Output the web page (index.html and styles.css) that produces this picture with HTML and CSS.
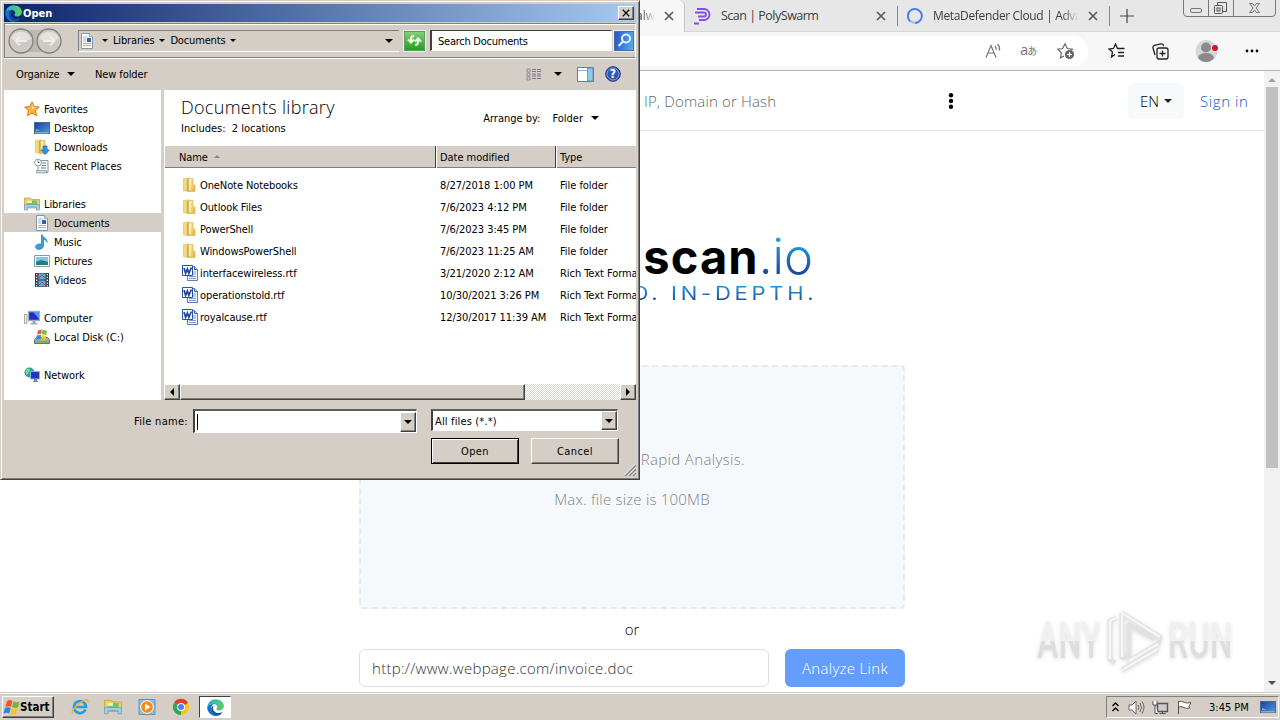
FILE: index.html
```
<!DOCTYPE html>
<html lang="en">
<head>
  <meta charset="UTF-8" />
  <meta name="viewport" content="width=device-width, initial-scale=1" />
  <title>Open</title>
  <link rel="stylesheet" href="styles.css">
</head>
<body>

  <!-- shared icons -->
  <svg class="defs" width="0" height="0">
    <defs>
      <linearGradient id="gFolder" x1="0" x2="1" y2="1"><stop offset="0" stop-color="#fff3b0"/><stop offset="1" stop-color="#e0b13c"/></linearGradient>
      <linearGradient id="gScreen" x1="0" x2="1" y2="1"><stop offset="0" stop-color="#1b3f94"/><stop offset="1" stop-color="#4c9be8"/></linearGradient>
      <linearGradient id="gEdge" x1="0" x2="1"><stop offset="0" stop-color="#22a7e0"/><stop offset="1" stop-color="#5fd45a"/></linearGradient>
      <symbol id="edge" viewBox="0 0 16 16">
        <path d="M0.2 7.600C.8 3.300 4 .2 8.200 .2c4.600 0 7.700 3 7.700 6.300 0 2.600-2 4.300-4.400 4.300-1.800 0-2.600-.7-2.600-1.300 0-.6.7-.9.7-2.100 0-1.500-1.500-2.700-3.600-2.700C3.600 4.700 1.300 5.800.2 7.600z" fill="url(#gEdge)"/>
        <path d="M.2 7.600C1.300 5.500 3.600 4.600 6 4.700 4.600 5.800 4 7.400 4 9.200c0 3.200 2.600 5.900 6 6.500A8 8 0 0 1 .2 7.600z" fill="#1672c4"/>
        <path d="M6.300 6.400C5.100 8 5.400 10.300 7 11.800c1.900 1.700 5 1.900 7.700.5-1 1.800-2.600 3-4.700 3.500C6.400 15.500 4 12.600 4 9.700c0-1.500.9-2.700 2.300-3.300z" fill="#0c4f9e"/>
      </symbol>
      <symbol id="star" viewBox="0 0 16 16"><path d="M8 .8l2.200 4.700 5.200.6-3.800 3.500 1 5.200L8 12.200l-4.600 2.600 1-5.200L.6 6.100l5.200-.6z" fill="#fcb53a" stroke="#c9771c" stroke-width=".9"/><path d="M8 3l1.300 3.400 3 .3-4.300 1z" fill="#ffe79a"/></symbol>
      <symbol id="desktop" viewBox="0 0 16 16"><rect x=".5" y="2.500" width="15" height="11" fill="url(#gScreen)" stroke="#49688f"/><path d="M1 12h14v1.500H1z" fill="#8ca9c6"/><path d="M2 9l4 2H2z" fill="#78b6ec"/></symbol>
      <symbol id="folder" viewBox="0 0 16 16"><path d="M1.500 1.500L7 .8v13.700l-5.500-.8z" fill="#f3da7f" stroke="#d9b95a" stroke-width=".6"/><path d="M6.500 1.500H11v6l2 .8v6.200H6.500z" fill="url(#gFolder)" stroke="#d1ac4e" stroke-width=".6"/><path d="M5.500 2v12.500" stroke="#d3a93c" stroke-width="1.200"/><path d="M8 3v10" stroke="#fff7cc" stroke-width="1.200"/></symbol>
      <symbol id="downloads" viewBox="0 0 16 16"><use href="#folder"/><path d="M9 7h4v4h2.500L11 15.500 6.800 11H9z" fill="#2f95e0" stroke="#1a69b0" stroke-width=".7"/></symbol>
      <symbol id="recent" viewBox="0 0 16 16"><path d="M4 2.500h10v12H4z" fill="#f4f8fa" stroke="#8296a3"/><path d="M2.500 12.500h10v2.500h-10z" fill="#cdd8df" stroke="#8296a3" stroke-width=".7"/><path d="M8 5h4M8 7.500h4M7 10h5" stroke="#6e8797"/><circle cx="4" cy="4.500" r="3.400" fill="#fff" stroke="#8c9ba5"/><path d="M4 2.500v2h1.700" stroke="#444" fill="none" stroke-width=".8"/></symbol>
      <symbol id="libraries" viewBox="0 0 16 16"><path d="M.5 2h6l1 1.500h8V12H.5z" fill="#f0cf68" stroke="#cba442" stroke-width=".8"/><path d="M3 4.500h10V9H3z" fill="#72c36b"/><path d="M3 4.500h5V7H3z" fill="#eaf3c4"/><path d="M.5 8.500h15v5.500h-3v-3h-9v3h-3z" fill="#9fd3ee" stroke="#699dbb" stroke-width=".7"/></symbol>
      <symbol id="doc" viewBox="0 0 16 16"><path d="M2.500.5h8l3 3v12h-11z" fill="#fff" stroke="#8495a8"/><path d="M10.500.5v3h3" fill="#dce6ef" stroke="#8495a8" stroke-width=".8"/><path d="M4 4h4.500M4 6h3M4 8h3M4 10.500h8M4 12.500h8" stroke="#8aaccb" stroke-width=".9"/><path d="M8 5h4v4H8z" fill="#2d66a4"/></symbol>
      <symbol id="music" viewBox="0 0 16 16"><path d="M8 .5c.6 3.200 5.500 3.500 5 8-.3-2-1.700-2.800-3.500-3V12c0 2-2 3.400-4.500 3.400S1.300 14 1.500 12.500 3.500 10 5.800 10c.8 0 1.400.2 1.700.3V.5z" fill="#3a9de0" stroke="#1b6fb5" stroke-width=".6"/></symbol>
      <symbol id="pictures" viewBox="0 0 16 16"><path d="M.5 2.500h15v11H.5z" fill="#fff" stroke="#8399ad"/><path d="M2 4h12v8H2z" fill="#7ec4ee"/><path d="M2 9l5-2 7 2v3H2z" fill="#257c79"/></symbol>
      <symbol id="videos" viewBox="0 0 16 16"><path d="M1 1h14v14H1z" fill="#333d48"/><path d="M4.500 1.500h7v6h-7zM4.500 8.500h7v6h-7z" fill="#64a9d8"/><path d="M5 6l3-3 3 3M5 13l3-3 3 3" stroke="#b04352" fill="none"/><path d="M2.700 2v13M13.300 2v13" stroke="#fff" stroke-width="1.300" stroke-dasharray="1.300 1.500"/></symbol>
      <symbol id="computer" viewBox="0 0 16 16"><path d="M.5 4.500h2.500v9H.5z" fill="#e8ecc9" stroke="#8b967e" stroke-width=".7"/><path d="M4.500 1.500h11v9h-11z" fill="#1d2fc0" stroke="#9ab0c9" stroke-width="1.300"/><path d="M9 2h6v7z" fill="#5f8ff0"/><path d="M8.500 11h3v2h2v1.500h-7V13h2z" fill="#9aaab9"/></symbol>
      <symbol id="disk" viewBox="0 0 16 16"><path d="M.5 10.500l2-2h11l2 2v4H.5z" fill="#a5adaf" stroke="#687073"/><path d="M1.500 12h13v1.800h-13z" fill="#6abd3e"/><path d="M4 1.500l3.500-1v4L3 5.500z" fill="#eb5b29"/><path d="M8.500.6L13 2l-1 4-4.200-1z" fill="#78bb36"/><path d="M2.700 6.500l4.500-.8-.6 4.300-4.400.7z" fill="#2f8cd6"/><path d="M8 6l4 1-.6 4-4-1z" fill="#f7c52c"/></symbol>
      <symbol id="network" viewBox="0 0 16 16"><circle cx="5.500" cy="5.500" r="5" fill="#28a1bc"/><path d="M2 3c2-2 4-1 4 0S4 5 4 7L2 8z" fill="#7bdc84"/><path d="M6.500 4.500h9v7.500h-9z" fill="#1b36bf" stroke="#9db3d5"/><path d="M10 12h3v2h1v1H9v-1h1z" fill="#75899d"/></symbol>
      <symbol id="word" viewBox="0 0 16 16"><path d="M5.500 1.500h7l3 3v11h-10z" fill="#f1f6fd" stroke="#5a7db5"/><path d="M12.500 1.500v3h3" fill="#b7cceb" stroke="#3d5f9e"/><path d="M11 7h3M11 9h3M7 11.500h7M7 13.500h7" stroke="#7ea0d4"/><path d="M.5.5h10v10H.5z" fill="#fff" stroke="#2952a0"/><path d="M2 3l1.600 5.300L5.400 4l1.400 4.300L9.400 2.500" fill="none" stroke="#1f459a" stroke-width="1.700"/></symbol>
      <symbol id="x" viewBox="0 0 10 10"><path d="M1 1l8 8M9 1L1 9" stroke="currentColor" stroke-width="1.600" fill="none"/></symbol>
    </defs>
  </svg>

  <div class="desktop">

    <!-- browser window behind the dialog -->
    <div class="browser">
      <div class="tabs">
        <div class="tab active"><span class="fade">Malw</span><svg class="close"><use href="#x"/></svg></div>
        <div class="tab poly">
          <svg width="18" height="18" viewBox="0 0 18 18" fill="none" stroke="#7e52dc" stroke-width="1.800"><path d="M3 2h7a5.500 5.500 0 0 1 0 11H5M1 5.500h9a2 2 0 0 1 0 4H4M0 16.500h5"/></svg>
          <span>Scan | PolySwarm</span><svg class="close"><use href="#x"/></svg>
        </div>
        <div class="tab meta">
          <svg width="16" height="16" viewBox="0 0 16 16" fill="none" stroke="#4c7df0" stroke-width="2"><path d="M3.500 13.500A7 7 0 1 1 8 15"/><path d="M3.500 13.500L8 15" stroke="#a0bcf5"/></svg>
          <span class="fade">MetaDefender Cloud | Adva</span><svg class="close"><use href="#x"/></svg>
        </div>
        <svg class="plus" width="14" height="14" viewBox="0 0 14 14"><path d="M7 0v14M0 7h14" stroke="#444" stroke-width="1.200"/></svg>
        <div class="winbtns">
          <svg width="93" height="17" viewBox="0 0 93 17" fill="none" stroke="#777"><path d="M.5 0v13q0 3.500 3.500 3.500h85q3.500 0 3.500-3.500V0M25.500 0v16M50.500 0v16"/><rect x="7.500" y="8.500" width="11" height="4" rx="1.500"/><rect x="31.500" y="5.500" width="8" height="8" rx="1" stroke="#555"/><rect x="34" y="8" width="3" height="3" stroke="#555"/><path d="M34.500 5V2.500h9v9H40" stroke="#555"/><path d="M66.500 3.500h3l2 2.500 2-2.500h3l-3.500 4.500 3.500 4.500h-3l-2-2.500-2 2.500h-3L70 8z"/></svg>
        </div>
      </div>
      <div class="toolbar">
        <div class="address">
          <svg width="17" height="16" viewBox="0 0 17 16" fill="none" stroke="#777" stroke-width="1.200"><path d="M1 14.500L6 2.500l5 12M2.800 10h6.500M10 3q1.500 1.500 1.200 4M12.500 1q2.500 2.500 2 6.500"/></svg>
          <span class="aa">a<small>あ</small></span>
          <svg width="18" height="18" viewBox="0 0 18 18" fill="none" stroke="#666" stroke-width="1.200"><path d="M7 14l-3.500 1.800.8-5L.8 7.200l4.800-.7L8 1.800l2.300 4.700 5 .7-1.300 1.300"/><circle cx="12.500" cy="12.500" r="4.600" fill="#666" stroke="none"/><path d="M12.500 10v5M10 12.500h5" stroke="#fff"/></svg>
        </div>
        <svg class="fav" width="17" height="16" viewBox="0 0 17 16" fill="none" stroke="#222" stroke-width="1.300"><path d="M7 11.500L3.500 14l1-5L1 6l4.500-.6L7.500 1l2 4.500h7M10 9.500h6M10 13h6"/></svg>
        <svg class="coll" width="17" height="17" viewBox="0 0 17 17" fill="none" stroke="#222" stroke-width="1.300"><rect x="5" y="5" width="11" height="11" rx="2"/><path d="M10.500 7.500v6M7.500 10.500h6M3 12L1 5q-.5-2 1.500-2.700L9 .9q2-.4 2.500 1.600l.2.500"/></svg>
        <svg class="user" width="24" height="24" viewBox="0 0 24 24"><circle cx="11.500" cy="12" r="11" fill="#d5d7d8"/><circle cx="11" cy="8.500" r="5" fill="#8c8989"/><path d="M3 19q1-5 8-5t8 5q-3 4-8 4t-8-4z" fill="#8c8989"/><circle cx="20" cy="9" r="3" fill="#d8121e"/></svg>
        <svg class="dots" width="14" height="4" viewBox="0 0 14 4"><circle cx="2" cy="2" r="1.400"/><circle cx="7" cy="2" r="1.400"/><circle cx="12" cy="2" r="1.400"/></svg>
      </div>

      <div class="viewport">
        <div class="site">
          <header class="site-header">
            <span class="lookup">IP, Domain or Hash</span>
            <svg class="kebab" width="6" height="16" viewBox="0 0 6 16"><circle cx="3" cy="2.200" r="2.200"/><circle cx="3" cy="8" r="2.200"/><circle cx="3" cy="13.800" r="2.200"/></svg>
            <button class="lang">EN <i class="caret"></i></button>
            <a class="signin">Sign in</a>
          </header>
          <main class="scan">
            <div class="logo"><span class="name">scan<span class="io">.io</span></span><span class="tagline">D. IN-DEPTH.</span></div>
            <div class="dropzone">
              <p class="drop-text">Rapid Analysis.</p>
              <p class="drop-size">Max. file size is 100MB</p>
            </div>
            <div class="or">or</div>
            <div class="link-row">
              <div class="url"><span>http://www.webpage.com/invoice.doc</span></div>
              <button class="analyze"><span>Analyze Link</span></button>
            </div>
          </main>
        </div>
        <div class="page-scroll"><i class="up"></i><div class="thumb"></div><i class="down"></i></div>
      </div>
    </div>

    <div class="watermark">
      <span class="any">ANY</span>
      <svg width="58" height="64" viewBox="0 0 58 64" fill="none" stroke-linejoin="round"><path d="M16 4v44l7 0V16l26 14M10 9L4 12v38l5 4M16 4l38 24-2 7-29 17M16 61l36-21" stroke="#e2e2e2" stroke-width="5"/><path d="M16 4v44M16 4l38 24M10 9L4 12v38M16 61l36-21M23 52l29-17" stroke="#f6f6f6" stroke-width="2.500"/></svg>
      <span class="run">RUN</span>
    </div>

    <!-- Open dialog -->
    <div class="dialog">
      <div class="titlebar"><svg width="17" height="17"><use href="#edge"/></svg><span>Open</span><button class="x-btn"><svg width="8" height="8"><use href="#x"/></svg></button></div>
      <div class="navbar">
        <svg class="arrows" width="54" height="28" viewBox="0 0 54 28"><path d="M13 3h28v22H13z" fill="#bcb9b4"/><g stroke="#82807c" stroke-width="1.300" fill="#cdcac5"><circle cx="13" cy="14" r="12"/><circle cx="41" cy="14" r="12"/></g><g fill="#e4e2df"><path d="M3 12a10.500 10.500 0 0 1 20 0q-10 4-20 0z"/><path d="M31 12a10.500 10.500 0 0 1 20 0q-10 4-20 0z"/></g><path d="M19 14H8M12 9.500L7.500 14l4.500 4.500M35 14h11M42 9.500l4.500 4.500-4.500 4.500" stroke="#efeeeb" stroke-width="1.800" fill="none"/></svg>
        <div class="crumbs"><svg width="16" height="16"><use href="#doc"/></svg><i class="tri s"></i><span class="c1">Libraries</span><i class="tri s"></i><span class="c2">Documents</span><i class="tri s"></i><i class="tri last"></i></div>
        <div class="refresh"><svg width="17" height="15" viewBox="0 0 17 15" fill="none" stroke="#e9ffe4" stroke-width="2"><path d="M2 6.500l3 3 3-3M5 9V6q0-3 3-3M9 8.500l3-3 3 3M12 6v3q0 3-3 3"/></svg></div>
        <div class="search"><span>Search Documents</span></div>
        <div class="search-btn"><svg width="17" height="17" viewBox="0 0 17 17" fill="none" stroke="#e8f4ff" stroke-width="2"><circle cx="10" cy="6.500" r="4"/><path d="M7 9.500L2.500 14"/></svg></div>
      </div>
      <div class="commands">
        <span class="organize">Organize</span><i class="tri"></i><span class="newfolder">New folder</span>
        <svg class="views" width="16" height="13" viewBox="0 0 16 13" fill="none"><path d="M1 1h3v3H1zM1 5h3v3H1zM1 9h3v3H1z" stroke="#888f9a"/><path d="M6 1.500h9M6 3.500h9M6 6h9M6 8h9M6 10.500h9" stroke="#777d86" stroke-dasharray="4 1"/></svg>
        <i class="tri t2"></i>
        <svg class="pane" width="17" height="15" viewBox="0 0 17 15"><path d="M.5.5h16v14H.5z" fill="#fff" stroke="#5b7fa5"/><path d="M1 3.500h10" stroke="#9ab4cf"/><path d="M10.500 1h5.500v13h-5.500z" fill="#8dcde3" stroke="#5b7fa5" stroke-width=".7"/></svg>
        <svg class="help" width="16" height="16" viewBox="0 0 16 16"><circle cx="8" cy="8" r="7.300" fill="#3157b4" stroke="#1d2f72"/><circle cx="8" cy="8" r="6" fill="none" stroke="#91aee2" stroke-width=".8"/><text x="8" y="12.200" text-anchor="middle" fill="#fff" font-size="12" font-weight="bold">?</text></svg>
      </div>

      <div class="content">
        <nav class="side">
          <div class="item"><svg><use href="#star"/></svg><span>Favorites</span></div>
          <div class="item sub"><svg><use href="#desktop"/></svg><span>Desktop</span></div>
          <div class="item sub"><svg><use href="#downloads"/></svg><span>Downloads</span></div>
          <div class="item sub"><svg><use href="#recent"/></svg><span>Recent Places</span></div>
          <div class="item gap"><svg><use href="#libraries"/></svg><span>Libraries</span></div>
          <div class="item sub selected"><svg><use href="#doc"/></svg><span>Documents</span></div>
          <div class="item sub"><svg><use href="#music"/></svg><span>Music</span></div>
          <div class="item sub"><svg><use href="#pictures"/></svg><span>Pictures</span></div>
          <div class="item sub"><svg><use href="#videos"/></svg><span>Videos</span></div>
          <div class="item gap"><svg><use href="#computer"/></svg><span>Computer</span></div>
          <div class="item sub"><svg><use href="#disk"/></svg><span>Local Disk (C:)</span></div>
          <div class="item gap"><svg><use href="#network"/></svg><span>Network</span></div>
        </nav>
        <section class="main">
          <div class="lib-head">
            <div><h1>Documents library</h1><p class="includes">Includes:&nbsp; 2 locations</p></div>
            <div class="arrange"><span>Arrange by:</span><span>Folder</span><i class="tri"></i></div>
          </div>
          <div class="row head"><div class="name"><span>Name</span> <i class="sort"></i></div><div class="date">Date modified</div><div class="type">Type</div></div>
          <div class="files">
            <div class="row"><div class="name"><svg><use href="#folder"/></svg><span>OneNote Notebooks</span></div><div class="date">8/27/2018 1:00 PM</div><div class="type">File folder</div></div>
            <div class="row"><div class="name"><svg><use href="#folder"/></svg><span>Outlook Files</span></div><div class="date">7/6/2023 4:12 PM</div><div class="type">File folder</div></div>
            <div class="row"><div class="name"><svg><use href="#folder"/></svg><span>PowerShell</span></div><div class="date">7/6/2023 3:45 PM</div><div class="type">File folder</div></div>
            <div class="row"><div class="name"><svg><use href="#folder"/></svg><span>WindowsPowerShell</span></div><div class="date">7/6/2023 11:25 AM</div><div class="type">File folder</div></div>
            <div class="row"><div class="name"><svg><use href="#word"/></svg><span>interfacewireless.rtf</span></div><div class="date">3/21/2020 2:12 AM</div><div class="type">Rich Text Format</div></div>
            <div class="row"><div class="name"><svg><use href="#word"/></svg><span>operationstold.rtf</span></div><div class="date">10/30/2021 3:26 PM</div><div class="type">Rich Text Format</div></div>
            <div class="row"><div class="name"><svg><use href="#word"/></svg><span>royalcause.rtf</span></div><div class="date">12/30/2017 11:39 AM</div><div class="type">Rich Text Format</div></div>
          </div>
          <div class="hscroll"><b class="sb"><i class="left"></i></b><div class="hthumb"></div><div class="track"></div><b class="sb"><i class="right"></i></b></div>
        </section>
      </div>

      <div class="footer">
        <div class="fields">
          <label>File name:</label>
          <div class="combo file"><span class="cursor"></span><b class="sb"><i class="tri"></i></b></div>
          <div class="combo filter"><span>All files (*.*)</span><b class="sb"><i class="tri"></i></b></div>
        </div>
        <div class="buttons"><button class="btn default">Open</button><button class="btn">Cancel</button></div>
        <svg class="grip" width="12" height="12" viewBox="0 0 12 12"><path d="M1 12L12 1M5 12l7-7M9 12l3-3" stroke="#808080" stroke-width="1.500"/><path d="M0 11.500L11.500 0M4 11.500L12 3.500M8 11.500l4-4" stroke="#fff" stroke-width=".8"/></svg>
      </div>
    </div>

    <div class="taskbar">
      <button class="start"><svg width="18" height="17" viewBox="0 0 18 17"><path d="M4 2q3-2 5.500 0L8 8Q5.500 6.500 2.300 8z" fill="#ee5a24"/><path d="M10.500 2.500q3 1.500 6 .2L15 8.500q-3 1-6-.5z" fill="#72b92c"/><path d="M2 9q3-1.500 5.700 0l-1.500 5.500q-2.500-1.500-5.700 0z" fill="#2b88d8"/><path d="M8.700 9.300q3 1.500 6 .3l-1.500 5.500q-3 1.300-6-.3z" fill="#fbc321"/></svg><span>Start</span></button>
      <svg class="task ie" viewBox="0 0 18 18" fill="none"><path d="M14.500 11.500A6 6 0 1 1 15 9H5" stroke="#2b9be0" stroke-width="2.700"/><path d="M2 15.500Q-1 14 6 7.500 14 0 16.500 2q1 1 0 3" stroke="#e9b62c" stroke-width="1.300"/></svg>
      <svg class="task ex" viewBox="0 0 16 16"><use href="#libraries"/></svg>
      <svg class="task wmp" viewBox="0 0 18 18"><path d="M1 1.500h16v15H1z" fill="#8cbfe2" stroke="#5b94bd"/><circle cx="9" cy="9" r="6.300" fill="#f28a1d" stroke="#fff"/><path d="M7 5.500l5.500 3.500L7 12.500z" fill="#fff"/></svg>
      <svg class="task chrome" viewBox="0 0 18 18"><circle cx="9" cy="9" r="8" fill="#fbc116"/><path d="M9 9L2 5a8 8 0 0 1 14 0z" fill="#e33b2e"/><path d="M9 9l0 8A8 8 0 0 1 2 5z" fill="#2da94f"/><circle cx="9" cy="9" r="4" fill="#fff"/><circle cx="9" cy="9" r="3" fill="#4285f4"/></svg>
      <div class="task-active"><svg width="17" height="17"><use href="#edge"/></svg></div>
      <div class="tray">
        <svg width="7" height="10" viewBox="0 0 7 10" fill="none" stroke="#000" stroke-width="1.400"><path d="M.5 4l3-3 3 3M.5 9l3-3 3 3"/></svg>
        <svg class="vol" width="17" height="15" viewBox="0 0 17 15" fill="none" stroke="#666"><path d="M1 5h3l4-4v13L4 10H1z" fill="#fff"/><path d="M10 5q1.500 2.500 0 5M12 3q3 4.500 0 9M14 1.500q4 6 0 12"/></svg>
        <svg class="net" width="17" height="15" viewBox="0 0 17 15" fill="#fff" stroke="#555"><path d="M5.500 3.500h10v8h-10z" fill="#ccc" stroke-width="1.400"/><path d="M7.500 13.500h6M10.500 12v2M1 1v4h4V1M3 5v8.500h3"/></svg>
        <svg class="flag" width="17" height="15" viewBox="0 0 17 15" fill="#fff" stroke="#555"><path d="M2.500 1v13M2.500 1.500q3-1 6 1 3 1 6.500 0l-2 4 1 1.500q-4 1-6-.5-3-1.500-5.500-.5z"/></svg>
        <span class="clock">3:45 PM</span>
        <svg class="show" width="16" height="16"><use href="#desktop"/></svg>
      </div>
    </div>
  </div>

</body>
</html>
```

FILE: styles.css
```
:root {
  --face: #d4cec6;
  --shadow: #808080;
  --dark: #404040;
}

* {
  box-sizing: border-box;
}

body {
  margin: 0;
  overflow: hidden;
}

p, h1 {
  margin: 0;
}

button {
  font-family: inherit;
  padding: 0;
}

svg {
  flex: none;
  display: block;
}

.defs {
  position: absolute;
}

.desktop {
  position: relative;
  width: 1280px;
  height: 720px;
  overflow: hidden;
  display: flex;
  flex-direction: column;
  background: #fff;
  font-family: "DejaVu Sans Condensed", "DejaVu Sans", sans-serif;
  font-stretch: condensed;
  font-size: 11px;
  color: #000;
  white-space: nowrap;
}

/* ---------- browser ---------- */

.browser {
  height: 692px;
  font-family: "Open Sans", "Noto Sans", sans-serif;
  font-stretch: normal;
}

.tabs {
  height: 32px;
  background: #e7e7e7;
  display: flex;
  align-items: center;
  padding-left: 630px;
  border-bottom: 1px solid #d5d5d5;
}

.tab {
  height: 32px;
  display: flex;
  align-items: center;
  font-size: 12px;
  color: #3c3c3c;
}

.tab.active {
  width: 55px;
  padding-right: 10px;
  justify-content: flex-end;
  background: #f7f7f7;
  border-right: 1px solid #c4c4c4;
  border-radius: 0 6px 0 0;
}

.fade {
  -webkit-mask-image: linear-gradient(90deg, #000 88%, transparent);
  mask-image: linear-gradient(90deg, #000 88%, transparent);
}

.tab.active .fade {
  margin-right: 9px;
  -webkit-mask-image: linear-gradient(90deg, #000 55%, transparent);
  mask-image: linear-gradient(90deg, #000 55%, transparent);
}

.close {
  width: 10px;
  height: 10px;
  color: #555;
}

.tab.poly {
  width: 212px;
  padding-left: 9px;
}

.tab.poly span {
  width: 155px;
  margin-left: 9px;
  font-size: 12.500px;
  letter-spacing: -.5px;
}

.tab.meta {
  width: 212px;
  padding-left: 10px;
}

.tab.meta, .plus {
  background: linear-gradient(#888, #888) 0 50% / 1px 20px no-repeat;
}

.tab.meta span {
  width: 146px;
  margin: 0 9px 0 10px;
  overflow: hidden;
  letter-spacing: -.35px;
}

.plus {
  width: 36px;
  padding: 0 11px;
  height: 20px;
}

.winbtns {
  margin-left: 38px;
  height: 32px;
}

.toolbar {
  height: 39px;
  background: #f7f7f7;
  display: flex;
  align-items: center;
  border-bottom: 1px solid #b4b4b4;
}

.address {
  width: 1088px;
  height: 30px;
  border-radius: 15px;
  background: #fff;
  display: flex;
  align-items: center;
  justify-content: flex-end;
  padding-right: 13px;
}

.aa {
  font-family: "Open Sans", "Noto Sans CJK JP", sans-serif;
  font-size: 15px;
  line-height: 18px;
  color: #777;
  width: 20px;
  margin: 0 17px 3px 18px;
  letter-spacing: -1px;
}

.aa small {
  font-size: 10px;
}

.fav { margin-left: 20px; }
.coll { margin-left: 27px; }
.user { margin-left: 26px; }
.dots { margin-left: 26px; }

.viewport {
  display: flex;
  height: 621px;
}

.site {
  width: 1264px;
  height: 621px;
}

.site-header {
  height: 60px;
  border-bottom: 1px solid #e4e6e8;
  display: flex;
  align-items: center;
  padding-left: 644px;
  font-size: 15px;
  font-weight: 300;
}

.lookup {
  width: 304px;
  color: #5f6468;
  letter-spacing: .15px;
}

.lang {
  width: 56px;
  height: 36px;
  margin-left: 174px;
  border: 0;
  border-radius: 5px;
  background: #f8f9fa;
  font-size: 15px;
  font-weight: 300;
  color: #000;
  display: flex;
  align-items: center;
  justify-content: center;
  gap: 5px;
}

.caret {
  border: 4px solid transparent;
  border-top-color: #212529;
  border-bottom: 0;
}

.signin {
  margin-left: 16px;
  color: #0a58ca;
  letter-spacing: .6px;
}

.scan {
  width: 546px;
  margin-left: 359px;
}

.logo {
  height: 234px;
  padding: 92px 92px 0 0;
  display: flex;
  flex-direction: column;
  align-items: flex-end;
}

.logo .name {
  font: 700 47px/68px Inter, sans-serif;
  letter-spacing: 1.100px;
}

.logo .io {
  font-size: 49px;
  font-weight: 300;
  letter-spacing: 0;
  background: linear-gradient(#1b9be0 30%, #234b95 75%);
  -webkit-background-clip: text;
  background-clip: text;
  color: transparent;
}

.logo .tagline {
  font: 400 19px/24px Inter, sans-serif;
  letter-spacing: 3.200px;
  margin-right: -4px;
  margin-top: -9px;
  transform: scaleX(1.16);
  transform-origin: 100% 50%;
  background: linear-gradient(#1b93dc 20%, #234b95 80%);
  -webkit-background-clip: text;
  background-clip: text;
  color: transparent;
}

.dropzone {
  height: 244px;
  border: 2px dashed #e9e9e9;
  border-radius: 4px;
  background: #f5f9fc;
  color: #808386;
  font-size: 15px;
  line-height: 24px;
  font-weight: 300;
  letter-spacing: .2px;
  padding-top: 80px;
}

.drop-text {
  text-align: right;
  padding-right: 158px;
  letter-spacing: .35px;
}

.drop-size {
  margin-top: 16px;
  text-align: center;
}

.or {
  height: 40px;
  text-align: center;
  font-size: 15px;
  line-height: 40px;
  font-weight: 300;
}

.link-row {
  display: flex;
  gap: 16px;
}

.url {
  width: 410px;
  height: 38px;
  border: 1px solid #dcdfe2;
  border-radius: 6px;
  padding-left: 12px;
  font-size: 15px;
  line-height: 36px;
  font-weight: 300;
  letter-spacing: .28px;
  color: #333;
}

.analyze {
  width: 120px;
  height: 38px;
  border: 0;
  border-radius: 6px;
  background: #639efc;
  color: #fff;
  font-size: 15px;
  font-weight: 300;
  letter-spacing: .3px;
}

.page-scroll {
  width: 16px;
  background: #f1f1f1;
  display: flex;
  flex-direction: column;
  align-items: center;
}

.page-scroll .up,
.page-scroll .down {
  border: 4px solid transparent;
}

.page-scroll .up {
  border-bottom-color: #a3a3a3;
  border-top: 0;
  margin: 7px 0 5px;
}

.page-scroll .thumb {
  width: 12px;
  height: 381px;
  background: #c1c1c1;
}

.page-scroll .down {
  border-top-color: #505050;
  border-bottom: 0;
  margin-top: 213px;
}

/* floating brand mark over the page */
.watermark {
  position: absolute;
  left: 1037px;
  top: 609px;
  display: flex;
  align-items: center;
  gap: 4px;
  filter: drop-shadow(0 1px 2px rgba(0, 0, 0, .12));
}

.watermark span {
  width: 96px;
  margin-right: -31px;
  font: 500 50px/64px Roboto, sans-serif;
  background: linear-gradient(#f0f0f0 50%, #dedede 50%);
  -webkit-background-clip: text;
  background-clip: text;
  color: transparent;
  transform: scaleX(.65);
  transform-origin: 0 50%;
}

/* ---------- dialog ---------- */

.dialog {
  position: absolute;
  left: 0;
  top: 0;
  width: 640px;
  height: 480px;
  background: var(--face);
  border: 1px solid var(--face);
  border-right-color: var(--dark);
  border-bottom-color: var(--dark);
  box-shadow: inset 1px 1px #fff, inset -1px -1px var(--shadow);
  padding: 3px;
}

.tri {
  border: 4px solid transparent;
  border-top-color: #000;
  border-bottom: 0;
}

.tri.s {
  border-width: 3px;
  border-bottom: 0;
}

.titlebar {
  height: 18px;
  display: flex;
  align-items: center;
  background: linear-gradient(90deg, #0a246a, #a6caf0);
  color: #fff;
  font-weight: bold;
  padding: 0 2px 0 1px;
}

.titlebar span {
  flex: 1;
  margin-left: 1px;
}

.x-btn, .sb {
  background: var(--face);
  border: 1px solid #fff;
  border-right-color: var(--dark);
  border-bottom-color: var(--dark);
  box-shadow: inset -1px -1px var(--shadow);
  display: flex;
  align-items: center;
  justify-content: center;
}

.x-btn {
  width: 16px;
  height: 14px;
  color: #000;
}

.navbar {
  margin-top: 1px;
  height: 35px;
  border: 1px solid var(--shadow);
  border-right-color: #fff;
  border-bottom-color: var(--shadow);
  box-shadow: 0 1px #fff, inset 0 1px #fff;
  display: flex;
  align-items: center;
  padding-left: 3px;
}

.crumbs {
  width: 321px;
  height: 22px;
  margin-left: 16px;
  border: 1px solid var(--shadow);
  border-width: 1px 0 1px 1px;
  border-bottom-color: #fff;
  display: flex;
  align-items: center;
}

.crumbs .tri.s { margin: 0 5px 0 7px; }
.crumbs .c1 + .tri.s { margin: 0 5px 0 5px; }
.crumbs .c2 + .tri.s { margin: 0 0 0 5px; }

.crumbs .c1, .crumbs .c2 {
  letter-spacing: -.15px;
}

.crumbs .last {
  margin-left: auto;
  margin-right: 6px;
}

.refresh, .search-btn {
  width: 21px;
  height: 20px;
  display: flex;
  align-items: center;
  justify-content: center;
  border: 1px solid #5e9c5e;
  outline: 1px solid #eee;
  background: linear-gradient(#85cf7a, #23a01f);
}

.refresh {
  margin-left: 5px;
}

.search {
  width: 182px;
  height: 21px;
  margin-left: 5px;
  border: 1px solid var(--shadow);
  border-top-color: var(--dark);
  border-left: 2px solid var(--dark);
  border-right-color: #fff;
  border-bottom-color: #fff;
  background: #fff;
  padding-left: 6px;
  line-height: 21px;
  letter-spacing: -.25px;
}

.search-btn {
  margin-left: 2px;
  width: 20px;
  border-color: #5568a8;
  background: linear-gradient(100deg, #2456c8, #58adf0);
}

.commands {
  height: 32px;
  display: flex;
  align-items: center;
  padding-left: 12px;
}

.organize { width: 44px; letter-spacing: -.1px; }
.commands .tri { margin-left: 7px; }
.newfolder { margin-left: 20px; width: 53px; letter-spacing: -.1px; }
.views { margin-left: 378px; }
.commands .t2 { margin-left: 12px; }
.pane { margin-left: 15px; }
.help { margin-left: 11px; }

.content {
  height: 310px;
  display: flex;
}

.side {
  width: 157px;
  background: #fff;
  padding-top: 9px;
  margin-right: 3px;
}

.item {
  height: 19px;
  display: flex;
  align-items: center;
  padding-left: 20px;
}

.item svg {
  width: 16px;
  height: 16px;
  margin-right: 4px;
}

.item span {
  padding-top: 2px;
  letter-spacing: -.1px;
}

.item.sub {
  padding-left: 30px;
}

.item.gap {
  margin-top: 19px;
}

.item.selected {
  background: var(--face);
}

.main {
  width: 472px;
  background: #fff;
  display: flex;
  flex-direction: column;
  overflow: hidden;
}

.lib-head {
  height: 56px;
  padding: 5px 37px 0 17px;
  display: flex;
  justify-content: space-between;
}

h1 {
  font: 300 18px/25px "Open Sans", sans-serif;
  letter-spacing: .3px;
  color: #000;
}

.includes {
  line-height: 17px;
}

.arrange {
  display: flex;
  align-items: center;
  gap: 8px;
  height: 46px;
}

.arrange span:first-child {
  margin-right: 4px;
}

.row {
  display: flex;
  height: 22px;
  align-items: center;
}

.row > div {
  height: 22px;
  line-height: 24px;
  flex: none;
  letter-spacing: -.05px;
}

.row .name {
  width: 272px;
  display: flex;
  align-items: center;
  padding-left: 18px;
  letter-spacing: -.1px;
}

.row .name span {
  padding-top: 2px;
}

.row .name svg {
  width: 16px;
  height: 16px;
  margin-right: 2px;
}

.row .date {
  width: 120px;
  padding-left: 4px;
}

.row .type {
  width: 90px;
  padding-left: 4px;
}

.row.head {
  background: var(--face);
  border-bottom: 1px solid var(--dark);
}

.row.head > div {
  border-right: 1px solid var(--dark);
  box-shadow: inset 1px 0 #fff, inset 0 -1px var(--shadow);
}

.row.head .name {
  padding-left: 15px;
}

.sort {
  border: 3px solid transparent;
  border-bottom-color: #8a8680;
  border-top: 0;
  margin-left: 6px;
}

.files {
  flex: 1;
  padding-top: 6px;
}

.hscroll {
  height: 16px;
  display: flex;
}

.hscroll .sb {
  width: 16px;
}

.left, .right {
  border: 4px solid transparent;
}

.left {
  border-right-color: #000;
  border-left: 0;
}

.right {
  border-left-color: #000;
  border-right: 0;
}

.hthumb {
  width: 345px;
  background: var(--face);
  border: 1px solid #fff;
  border-right-color: var(--dark);
  border-bottom-color: var(--dark);
  box-shadow: inset -1px -1px var(--shadow);
}

.track {
  flex: 1;
  background: repeating-conic-gradient(#fff 0 25%, #dcd8d2 0 50%) 0 0 / 2px 2px;
}

.footer {
  position: relative;
  height: 76px;
  padding-top: 9px;
}

.fields {
  display: flex;
  align-items: center;
}

.fields label {
  width: 184px;
  text-align: right;
  letter-spacing: .3px;
}

.combo {
  height: 24px;
  display: flex;
  align-items: center;
  background: #fff;
  border: 2px solid var(--dark);
  border-top-color: #5c5c5c;
  border-right: 1px solid #fff;
  border-bottom: 1px solid #fff;
}

.combo span {
  flex: 1;
  letter-spacing: .15px;
}

.combo .sb {
  width: 16px;
  height: 20px;
}

.combo.file {
  width: 224px;
  margin-left: 5px;
}

.combo.filter {
  width: 187px;
  height: 22px;
  margin: 0 0 2px 14px;
  padding-left: 2px;
}

.combo .cursor {
  flex: none;
  width: 1px;
  height: 16px;
  background: #000;
  margin: 0 auto 0 2px;
}

.combo.filter .sb {
  height: 19px;
}

.combo.filter span {
  padding-top: 2px;
}

.buttons {
  display: flex;
  gap: 12px;
  margin: 5px 0 0 427px;
}

.btn {
  width: 88px;
  height: 26px;
  font-size: 11px;
  letter-spacing: .4px;
  background: var(--face);
  border: 1px solid #fff;
  border-right-color: var(--dark);
  border-bottom-color: var(--dark);
  box-shadow: inset -1px -1px var(--shadow);
}

.btn.default {
  border-color: #000;
  box-shadow: inset 1px 1px #fff, inset -1px -1px var(--dark);
}

.grip {
  position: absolute;
  right: 0;
  bottom: 0;
}

/* ---------- taskbar ---------- */

.taskbar {
  height: 28px;
  background: var(--face);
  border-top: 1px solid var(--face);
  box-shadow: inset 0 1px #fff;
  display: flex;
  align-items: center;
  padding: 1px 1px 0 2px;
}

.start {
  width: 52px;
  height: 22px;
  display: flex;
  align-items: center;
  background: var(--face);
  border: 1px solid #fff;
  border-right-color: var(--dark);
  border-bottom-color: var(--dark);
  box-shadow: inset -1px -1px var(--shadow);
  font-size: 11.500px;
  font-weight: bold;
}

.start span {
  margin-left: -1px;
}

.task {
  width: 18px;
  height: 18px;
}

.ie { margin-left: 17px; }
.ex { margin-left: 15px; }
.wmp { margin-left: 16px; }
.chrome { margin-left: 16px; }

.task-active {
  width: 32px;
  height: 22px;
  margin-left: 9px;
  border: 1px solid var(--dark);
  border-right-color: #fff;
  border-bottom-color: #fff;
  background: #fff;
  display: flex;
  align-items: center;
  justify-content: center;
}

.tray {
  width: 173px;
  height: 22px;
  margin-left: auto;
  border: 1px solid var(--shadow);
  border-right-color: #fff;
  border-bottom-color: #fff;
  display: flex;
  align-items: center;
  padding-left: 5px;
}

.vol { margin-left: 9px; }
.net { margin-left: 7px; }
.flag { margin-left: 7px; }
.clock { margin-left: 16px; width: 41px; }
.show { margin-left: 10px; }
```
